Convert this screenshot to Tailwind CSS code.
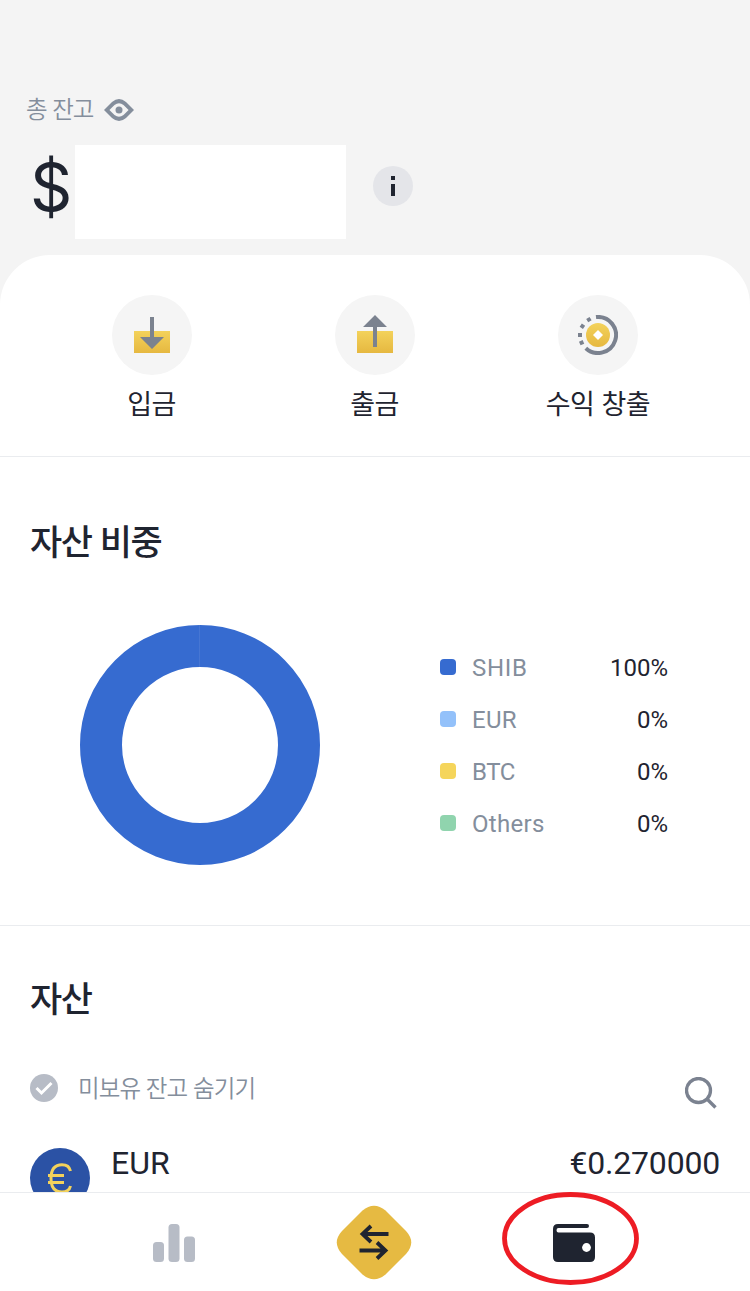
<!DOCTYPE html>
<html lang="ko">
<head>
<meta charset="utf-8">
<title>지갑</title>
<script src="https://cdn.jsdelivr.net/npm/@tailwindcss/browser@4"></script>
</head>
<body class="relative flex h-[1291px] w-[750px] flex-col overflow-hidden bg-[#f4f4f4] font-['Roboto','Noto_Sans_CJK_KR',sans-serif] text-[#1f2430]">
  <header class="h-[255px] shrink-0 pt-[91px]">
    <div class="flex h-[34px] items-center pl-[26px] text-[#848e9c]">
      <span class="w-[78px] whitespace-nowrap font-['Noto_Sans_CJK_KR'] text-[23.5px] leading-[34px] font-[350] tracking-[-1px]">총 잔고</span>
      <svg class="mt-[3px] h-[22px] w-[30px]" viewBox="0 0 30 22" fill="currentColor"><path fill-rule="evenodd" d="M0 11 8 3Q15-3 22 3L30 11 22 19Q15 25 8 19ZM5.400 11 10.500 16Q15 19.500 19.500 16L24.600 11 19.500 6Q15 2.500 10.500 6Z"/><circle cx="15" cy="11" r="3.500"/></svg>
    </div>
    <div class="mt-5 flex h-[94px]">
      <span class="w-[75px] pl-[30px] font-['Inter'] text-[66px] leading-[84px] font-normal">$</span>
      <div class="h-[94px] w-[271px] bg-white"></div>
      <div class="mt-[21px] ml-[27px] flex size-10 items-center justify-center rounded-full bg-[#e4e5e9]">
        <svg class="h-5 w-1" viewBox="0 0 4 20" fill="#1f2430"><path d="M0 0h4v4H0zM0 8h4v12H0z"/></svg>
      </div>
    </div>
  </header>

  <main class="flex h-[937px] shrink-0 flex-col overflow-hidden rounded-t-[50px] bg-white">
    <section class="flex h-[202px] shrink-0 justify-center border-b border-[#eaecef] pt-10 font-['Noto_Sans_CJK_KR'] text-[27px] leading-[40px] tracking-[-0.5px]">
      <div class="flex w-[223px] flex-col items-center">
        <div class="flex size-20 items-center justify-center rounded-full bg-[#f5f5f5]">
          <svg class="size-10" viewBox="0 0 40 40"><defs><linearGradient id="gold" x2="0" y2="1"><stop stop-color="#f3d25b"/><stop offset="1" stop-color="#e6b840"/></linearGradient></defs><path fill="url(#gold)" d="M2 16h36v22H2z"/><path fill="#7b828f" d="M18 2h4v20h10L20 34 8 22h10z"/></svg>
        </div>
        <span class="mt-2 mr-px">입금</span>
      </div>
      <div class="flex w-[223px] flex-col items-center">
        <div class="flex size-20 items-center justify-center rounded-full bg-[#f5f5f5]">
          <svg class="size-10" viewBox="0 0 40 40"><path fill="url(#gold)" d="M2 16h36v22H2z"/><path fill="#7b828f" d="M18 32h4V12h10L20 0 8 12h10z"/></svg>
        </div>
        <span class="mt-2 mr-px">출금</span>
      </div>
      <div class="flex w-[223px] flex-col items-center">
        <div class="flex size-20 items-center justify-center rounded-full bg-[#f5f5f5]">
          <svg class="size-10" viewBox="0 0 40 40"><g fill="none" stroke="#7b828f" stroke-width="4"><path d="M18 2.100A18 18 0 1 1 7.800 33.200"/><path d="M9.200 5.600 12.600 3.600M3.300 12.900 5.500 9.700M2 22V18M4.400 29.500 2.800 25.900"/></g><circle cx="20" cy="20" r="12" fill="url(#gold)"/><path fill="#fff" d="m20 15 5 5-5 5-5-5z"/></svg>
        </div>
        <span class="mt-2">수익 창출</span>
      </div>
    </section>

    <section class="h-[469px] shrink-0 border-b border-[#eaecef] pt-[57px]">
      <h2 class="pl-[30px] font-['Noto_Sans_CJK_KR'] text-[35px] leading-[52px] font-medium tracking-[-1.5px]">자산 비중</h2>
      <div class="mt-[59px] flex pl-20">
        <svg class="size-60" viewBox="0 0 240 240"><circle cx="120" cy="120" r="99" fill="none" stroke="#366bd0" stroke-width="42"/><path stroke="#4676d3" d="M119.500 0v42"/></svg>
        <div class="ml-[120px] flex w-[228px] flex-col pt-4 text-2xl leading-[52px]">
          <div class="flex h-[52px] items-center"><i class="size-4 rounded bg-[#366bd0]"></i><span class="ml-4 flex-1 pt-0.5 tracking-[0.7px] text-[#848e9c]">SHIB</span><span class="pt-0.5">100%</span></div>
          <div class="flex h-[52px] items-center"><i class="size-4 rounded bg-[#93c1fa]"></i><span class="ml-4 flex-1 pt-0.5 tracking-[0.3px] text-[#848e9c]">EUR</span><span class="pt-0.5">0%</span></div>
          <div class="flex h-[52px] items-center"><i class="size-4 rounded bg-[#f5d55b]"></i><span class="ml-4 flex-1 pt-0.5 tracking-[-0.4px] text-[#848e9c]">BTC</span><span class="pt-0.5">0%</span></div>
          <div class="flex h-[52px] items-center"><i class="size-4 rounded bg-[#90d4ae]"></i><span class="ml-4 flex-1 pt-0.5 tracking-[0.3px] text-[#848e9c]">Others</span><span class="pt-0.5">0%</span></div>
        </div>
      </div>
    </section>

    <section class="flex-1 px-[30px] pt-[45px]">
      <h2 class="font-['Noto_Sans_CJK_KR'] text-[35px] leading-[52px] font-medium tracking-[-1.5px]">자산</h2>
      <div class="mt-[49px] flex h-8 items-center">
        <svg class="size-7" viewBox="0 0 28 28"><circle cx="14" cy="14" r="14" fill="#b7bcc6"/><path d="m6.500 14 5 5L21.500 9" fill="none" stroke="#fff" stroke-width="3"/></svg>
        <span class="-mt-0.5 ml-5 flex-1 font-['Noto_Sans_CJK_KR'] text-[23.5px] leading-8 font-[350] tracking-[-0.9px] text-[#848e9c]">미보유 잔고 숨기기</span>
        <svg class="mt-[9px] mr-[3px] size-8" viewBox="0 0 32 32" fill="none" stroke="#7b8290" stroke-width="3.300"><circle cx="13.500" cy="13.500" r="12"/><path d="m22 22 8.500 8.500"/></svg>
      </div>
      <div class="mt-11 flex text-[32px] leading-[30px]">
        <svg class="size-[60px]" viewBox="0 0 60 60"><circle cx="30" cy="30" r="30" fill="#2b52a5"/><path d="M40.500 23C39.500 18.500 36 16.700 32 16.700 25 16.700 21 21 21 30.500S25 44 32 44C36 44 39.500 42.500 40.500 38M18 27.500h16M18 34.500h16" fill="none" stroke="#f3d25b" stroke-width="3"/></svg>
        <span class="ml-[21px] flex-1">EUR</span>
        <span class="tracking-[-0.2px]">€0.270000</span>
      </div>
    </section>
  </main>

  <nav class="relative flex h-[99px] shrink-0 items-start border-t border-[#eaecef] bg-white">
    <svg class="mt-[31px] ml-[153px] h-[38px] w-[42px]" viewBox="0 0 42 38" fill="#b7bcc6"><rect y="18" width="11" height="20" rx="3.500"/><rect x="15.500" width="11" height="38" rx="3.500"/><rect x="31" y="12.500" width="11" height="25.500" rx="3.500"/></svg>
    <svg class="mt-3 ml-[141px] h-[75px] w-[76px]" viewBox="0 0 76 75"><path fill="#e6ba42" d="M26.500 5.500Q38-4 49.500 5.500L70 26Q80.500 37.500 70 49L49.500 69.500Q38 79 26.500 69.500L6 49Q-4.500 37.500 6 26Z"/><path d="M52.500 29H26m9-8-8.500 8L35 37M23.500 45.500H50m-9-8 8.500 8L41 53.500" fill="none" stroke="#1f2430" stroke-width="3.800"/></svg>
    <svg class="mt-[31px] ml-[141px] h-[38px] w-[42px]" viewBox="0 0 42 38"><path fill="#1f2430" d="M5 0H34Q36 0 36 2T34 4H5.500Q3.500 4 3.500 6.200T5.500 8.500H37Q42 8.500 42 13.500V33Q42 38 37 38H5Q0 38 0 33V5Q0 0 5 0Z"/><circle cx="33.500" cy="23.500" r="4.400" fill="#fff"/></svg>
    <svg class="absolute top-[-2px] left-[501px] h-[94px] w-[138px]" viewBox="0 0 138 94"><ellipse cx="69.500" cy="47.500" rx="66" ry="44" fill="none" stroke="#ed1c24" stroke-width="4.800"/></svg>
  </nav>
</body>
</html>
